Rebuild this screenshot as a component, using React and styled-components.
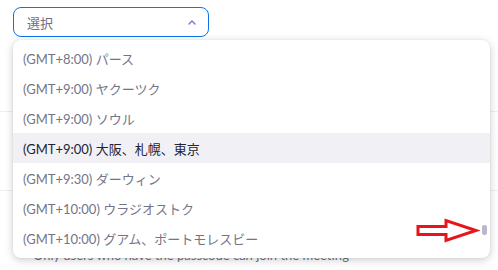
import React from "react";
import styled, { createGlobalStyle } from "styled-components";

const Global = createGlobalStyle`
  html, body { margin: 0; padding: 0; background: #ffffff; }
  body { font-family: Lato, "Noto Sans CJK JP", "Noto Sans", sans-serif; }
`;

const Page = styled.div`
  position: relative;
  width: 498px;
  height: 270px;
  overflow: hidden;
  background: #ffffff;
  display: flex;
  flex-direction: column;
  padding-top: 7px;
  box-sizing: border-box;
`;

const SelectBox = styled.div`
  box-sizing: border-box;
  margin-left: 13px;
  width: 196px;
  height: 30px;
  flex: none;
  border: 1px solid #0e72ed;
  border-radius: 8px;
  display: flex;
  align-items: center;
  justify-content: space-between;
  padding: 0 12px 0 13px;
  font-size: 13px;
  color: #6e6e80;
`;

const Section = styled.div`
  flex: none;
  height: ${(p) => p.h}px;
  border-bottom: ${(p) => (p.last ? "none" : "1px solid #ededf2")};
`;

const Hint = styled.div`
  padding-left: 33px;
  font-size: 13px;
  color: #747487;
  line-height: 16px;
  white-space: nowrap;
`;

const Dropdown = styled.div`
  position: absolute;
  top: 40px;
  left: 13px;
  width: 477px;
  height: 218px;
  border-radius: 8px;
  background: #ffffff;
  box-shadow: 0 2px 8px rgba(0, 0, 0, 0.2), 0 0 2px rgba(0, 0, 0, 0.08);
  overflow: hidden;
`;

const List = styled.ul`
  list-style: none;
  margin: 0;
  padding: 3px 0 0;
  display: flex;
  flex-direction: column;
`;

const Item = styled.li`
  height: 30px;
  display: flex;
  align-items: center;
  padding-left: 10px;
  font-size: 13px;
  color: ${(p) => (p.active ? "#232333" : "#747487")};
  background: ${(p) => (p.active ? "#f1f1f5" : "transparent")};
  white-space: nowrap;
`;

const Thumb = styled.div`
  position: absolute;
  right: 3px;
  top: 185px;
  width: 5px;
  height: 10px;
  border-radius: 2px;
  background: #b9b9cc;
`;

const Annotation = styled.svg`
  position: absolute;
  left: 416px;
  top: 218px;
`;

const items = [
  "(GMT+8:00) パース",
  "(GMT+9:00) ヤクーツク",
  "(GMT+9:00) ソウル",
  "(GMT+9:00) 大阪、札幌、東京",
  "(GMT+9:30) ダーウィン",
  "(GMT+10:00) ウラジオストク",
  "(GMT+10:00) グアム、ポートモレスビー",
];

export default function App() {
  return (
    <Page>
      <Global />
      <SelectBox>
        <span>選択</span>
        <svg width="8" height="5" viewBox="0 0 8 5">
          <polyline points="1,4 4,1 7,4" fill="none" stroke="#6b6fe0" strokeWidth="1.3" strokeLinecap="round" strokeLinejoin="round" />
        </svg>
      </SelectBox>
      <Section h={74} />
      <Section h={78} />
      <Section h={56} last />
      <Hint>Only users who have the passcode can join the meeting</Hint>
      <Dropdown>
        <List>
          {items.map((t, i) => (
            <Item key={t} active={i === 3}>{t}</Item>
          ))}
        </List>
        <Thumb />
      </Dropdown>
      <Annotation width="64" height="26" viewBox="0 0 64 26">
        <path
          d="M2 8.5 H30 V2.5 L60 12.5 L30 22.5 V16.5 H2 Z"
          fill="#ffffff"
          stroke="#e8141c"
          strokeWidth="3"
          strokeLinejoin="miter"
        />
      </Annotation>
    </Page>
  );
}
